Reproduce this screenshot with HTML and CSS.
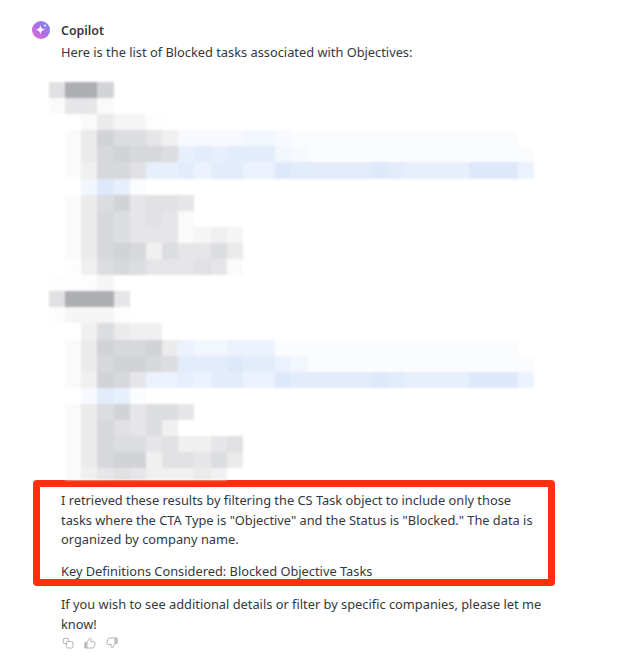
FILE: index.html
```html
<!DOCTYPE html>
<html lang="en">
	<head>
		<meta name="viewport" content="width=device-width, initial-scale=1" />
		<title>Copilot</title>
		<link rel="stylesheet" href="styles.css">
	</head>
	<body>
		<div class="message">
			<svg class="avatar" viewBox="0 0 18 18" width="18" height="18">
				<defs>
					<linearGradient id="avatarFill" x1="0" y1="1" x2="1" y2="0">
						<stop offset="0" stop-color="#e56ad0" />
						<stop offset="0.5" stop-color="#b06ee8" />
						<stop offset="1" stop-color="#6a8cf5" />
					</linearGradient>
				</defs>
				<circle cx="9" cy="9" r="9" fill="url(#avatarFill)" />
				<path d="M8.4 3.6 C8.8 7 9.8 8.2 13.4 8.8 C9.8 9.4 8.8 10.6 8.4 14 C8 10.6 7 9.4 3.4 8.8 C7 8.2 8 7 8.4 3.6 Z" fill="#fff" />
				<circle cx="13" cy="4.6" r="1" fill="#fff" />
			</svg>
			<div class="body">
				<div class="sender">Copilot</div>
				<p class="intro">Here is the list of Blocked tasks associated with Objectives:</p>

				<div class="mosaic">
					<div class="mrow"><i class="g4"></i><i class="k"></i><i class="k"></i><i class="g1"></i></div>
					<div class="mrow"><i class="g9"></i><i class="g5"></i><i class="g5"></i><i class="g9"></i></div>
					<div class="mrow"><i></i><i></i><i class="g9"></i><i class="g6"></i><i class="g8"></i><i class="g8"></i><i class="g0"></i></div>
					<div class="mrow"><i></i><i class="g9"></i><i class="g6"></i><i class="g1"></i><i class="g3"></i><i class="g3"></i><i class="g5"></i><i class="g7"></i><i class="b6"></i><i class="b6"></i><i class="b6"></i><i class="b6"></i><i class="b5"></i><i class="b5"></i><i class="b6"></i><i class="b7"></i><i class="b7"></i><i class="b7"></i><i class="b7"></i><i class="b7"></i><i class="b7"></i><i class="b7"></i><i class="b7"></i><i class="b7"></i><i class="b7"></i><i class="b7"></i><i class="b7"></i><i class="b7"></i><i class="b7"></i></div>
					<div class="mrow"><i></i><i class="g9"></i><i class="g6"></i><i class="g2"></i><i class="g1"></i><i class="g2"></i><i class="g2"></i><i class="g3"></i><i class="b3"></i><i class="b2"></i><i class="b3"></i><i class="b2"></i><i class="b2"></i><i class="b2"></i><i class="b5"></i><i class="b6"></i><i class="b7"></i><i class="b7"></i><i class="b7"></i><i class="b7"></i><i class="b7"></i><i class="b7"></i><i class="b7"></i><i class="b7"></i><i class="b7"></i><i class="b7"></i><i class="b7"></i><i class="b7"></i><i class="b7"></i><i class="b7"></i></div>
					<div class="mrow"><i></i><i class="g9"></i><i class="g7"></i><i class="g2"></i><i class="g2"></i><i class="g4"></i><i class="b3"></i><i class="b3"></i><i class="b2"></i><i class="b4"></i><i class="b2"></i><i class="b2"></i><i class="b4"></i><i class="b4"></i><i class="b1"></i><i class="b2"></i><i class="b2"></i><i class="b2"></i><i class="b2"></i><i class="b2"></i><i class="b1"></i><i class="b2"></i><i class="b3"></i><i class="b3"></i><i class="b3"></i><i class="b3"></i><i class="b1"></i><i class="b1"></i><i class="b1"></i><i class="b4"></i></div>
					<div class="mrow"><i></i><i></i><i class="b5"></i><i class="b1"></i><i class="b3"></i><i class="b7"></i></div>
					<div class="mrow"><i></i><i class="g9"></i><i class="g6"></i><i class="g3"></i><i class="g1"></i><i class="g5"></i><i class="g4"></i><i class="g4"></i><i class="g5"></i></div>
					<div class="mrow"><i></i><i class="g9"></i><i class="g6"></i><i class="g2"></i><i class="g3"></i><i class="g5"></i><i class="g4"></i><i class="g5"></i><i class="g9"></i></div>
					<div class="mrow"><i></i><i class="g9"></i><i class="g6"></i><i class="g2"></i><i class="g3"></i><i class="g5"></i><i class="g5"></i><i class="g5"></i><i class="g9"></i><i class="g8"></i><i class="g7"></i><i class="g8"></i></div>
					<div class="mrow"><i></i><i class="g9"></i><i class="g6"></i><i class="g2"></i><i class="g1"></i><i class="g2"></i><i class="g7"></i><i class="g3"></i><i class="g5"></i><i class="g5"></i><i class="g3"></i><i class="g6"></i></div>
					<div class="mrow"><i></i><i class="g0"></i><i class="g7"></i><i class="g3"></i><i class="g2"></i><i class="g3"></i><i class="g5"></i><i class="g5"></i><i class="g5"></i><i class="g4"></i><i class="g5"></i><i class="g9"></i></div>
					<div class="mrow"><i class="g0"></i><i class="g0"></i><i class="g0"></i><i class="g8"></i></div>

					<div class="mrow"><i class="g4"></i><i class="k"></i><i class="k"></i><i class="k"></i><i class="g5"></i></div>
					<div class="mrow"><i class="g0"></i><i class="g8"></i><i class="g8"></i><i class="g8"></i><i class="g0"></i></div>
					<div class="mrow"><i></i><i></i><i class="g7"></i><i class="g3"></i><i class="g6"></i><i class="g7"></i><i class="g7"></i></div>
					<div class="mrow"><i></i><i class="g9"></i><i class="g6"></i><i class="g1"></i><i class="g2"></i><i class="g2"></i><i class="g1"></i><i class="g6"></i><i class="b4"></i><i class="b5"></i><i class="b5"></i><i class="b4"></i><i class="b4"></i><i class="b4"></i><i class="b7"></i><i class="b7"></i><i class="b7"></i><i class="b7"></i><i class="b7"></i><i class="b7"></i><i class="b7"></i><i class="b7"></i><i class="b7"></i><i class="b7"></i><i class="b7"></i><i class="b7"></i><i class="b7"></i><i class="b7"></i><i class="b7"></i></div>
					<div class="mrow"><i></i><i class="g9"></i><i class="g6"></i><i class="g2"></i><i class="g1"></i><i class="g1"></i><i class="g2"></i><i class="g3"></i><i class="b2"></i><i class="b2"></i><i class="b2"></i><i class="b1"></i><i class="b2"></i><i class="b2"></i><i class="b4"></i><i class="b5"></i><i class="b7"></i><i class="b7"></i><i class="b7"></i><i class="b7"></i><i class="b7"></i><i class="b7"></i><i class="b7"></i><i class="b7"></i><i class="b7"></i><i class="b7"></i><i class="b7"></i><i class="b7"></i><i class="b7"></i><i class="b7"></i></div>
					<div class="mrow"><i></i><i class="g9"></i><i class="g7"></i><i class="g1"></i><i class="g2"></i><i class="g5"></i><i class="b4"></i><i class="b4"></i><i class="b3"></i><i class="b4"></i><i class="b2"></i><i class="b2"></i><i class="b4"></i><i class="b4"></i><i class="b1"></i><i class="b2"></i><i class="b2"></i><i class="b2"></i><i class="b2"></i><i class="b2"></i><i class="b1"></i><i class="b2"></i><i class="b3"></i><i class="b3"></i><i class="b3"></i><i class="b3"></i><i class="b1"></i><i class="b1"></i><i class="b1"></i><i class="b4"></i></div>
					<div class="mrow"><i></i><i></i><i class="b6"></i><i class="b2"></i><i class="b3"></i><i class="b7"></i></div>
					<div class="mrow"><i></i><i class="g9"></i><i class="g6"></i><i class="g3"></i><i class="g1"></i><i class="g5"></i><i class="g3"></i><i class="g3"></i><i class="g5"></i></div>
					<div class="mrow"><i></i><i class="g9"></i><i class="g6"></i><i class="g2"></i><i class="g4"></i><i class="g5"></i><i class="g3"></i><i class="g7"></i></div>
					<div class="mrow"><i></i><i class="g9"></i><i class="g6"></i><i class="g2"></i><i class="g3"></i><i class="g3"></i><i class="g5"></i><i class="g4"></i><i class="g7"></i><i class="g7"></i><i class="g5"></i><i class="g4"></i></div>
					<div class="mrow"><i></i><i class="g9"></i><i class="g6"></i><i class="g2"></i><i class="g1"></i><i class="g1"></i><i class="g7"></i><i class="g4"></i><i class="g4"></i><i class="g5"></i><i class="g3"></i><i class="g6"></i></div>
					<div class="mrow"><i></i><i class="g9"></i><i class="g7"></i><i class="g5"></i><i class="g4"></i><i class="g5"></i><i class="g7"></i><i class="g7"></i><i class="g7"></i><i class="g6"></i><i class="g7"></i></div>
				</div>

				<div class="highlight">
					<p>I retrieved these results by filtering the CS Task object to include only those tasks where the CTA Type is "Objective" and the Status is "Blocked." The data is organized by company name.</p>
					<p>Key Definitions Considered: Blocked Objective Tasks</p>
				</div>

				<p class="outro">If you wish to see additional details or filter by specific companies, please let me know!</p>

				<div class="actions">
					<svg viewBox="0 0 12 12" width="12" height="12">
						<circle cx="4" cy="4" r="3" />
						<rect x="4.5" y="4.5" width="6.5" height="6.5" rx="1.5" fill="#fff" />
					</svg>
					<svg viewBox="0 0 12 12" width="12" height="12">
						<path class="solid" d="M0.8 5.6 H3 V11 H0.8 Z" />
						<path d="M3 5.6 L5.6 1 C6.8 1 7.4 2 7 3.2 L6.6 4.6 H10.2 C11 4.6 11.4 5.4 11.2 6 L10 10 C9.8 10.6 9.4 11 8.8 11 H3" />
					</svg>
					<svg viewBox="0 0 12 12" width="12" height="12">
						<path class="solid" d="M9 1 H11.2 V6.4 H9 Z" />
						<path d="M9 6.4 L6.4 11 C5.2 11 4.6 10 5 8.8 L5.4 7.4 H1.8 C1 7.4 0.6 6.6 0.8 6 L2 2 C2.2 1.4 2.6 1 3.2 1 H9" />
					</svg>
				</div>
			</div>
		</div>
	</body>
</html>
```

FILE: styles.css
```css
body {
	background-color: #fff;
	color: #333840;
	font: 12.82px/19.5px "Noto Sans", "Open Sans", sans-serif;
	margin: 0;
}
p {
	margin: 0;
}
.message {
	display: flex;
	gap: 11px;
	padding: 21px 0 0 32px;
}
.avatar {
	flex: none;
}
.body {
	width: 490px;
}
.sender {
	font-weight: 600;
	font-size: 12.4px;
}
.intro {
	margin-top: 2px;
}
.mosaic {
	margin: 20px 0 0 -12px;
	height: 398px;
	overflow: hidden;
	filter: blur(1px);
}
.mrow {
	display: flex;
	height: 16.1px;
}
.mrow i {
	flex: 0 0 16.17px;
}
.k { background: #adaeb2; }
.g1 { background: #d2d3d6; }
.g2 { background: #d7d8db; }
.g3 { background: #dcdde0; }
.g4 { background: #e1e1e3; }
.g5 { background: #e6e6e8; }
.g6 { background: #ebebec; }
.g7 { background: #f0f0f1; }
.g8 { background: #f5f5f5; }
.g9 { background: #fafafa; }
.g0 { background: #fdfdfd; }
.b1 { background: #dde9fb; }
.b2 { background: #e2ecfb; }
.b3 { background: #e7effc; }
.b4 { background: #ecf2fd; }
.b5 { background: #f2f7fe; }
.b6 { background: #f7f9fe; }
.b7 { background: #fbfcfe; }
.highlight {
	margin-left: -28px;
	width: 480px;
	height: 88px;
	padding: 4px 7px 0 21px;
	border: 7px solid #ff2f0f;
	border-radius: 4px;
	overflow: hidden;
}
.highlight p + p {
	margin-top: 12.5px;
}
.outro {
	margin-top: 9px;
}
.actions {
	display: flex;
	gap: 10px;
	margin-top: 3px;
	padding-left: 1px;
}
.actions svg {
	fill: none;
	stroke: #b2b4b8;
	stroke-width: 1;
}
.actions .solid {
	fill: #c4c6ca;
}
```
